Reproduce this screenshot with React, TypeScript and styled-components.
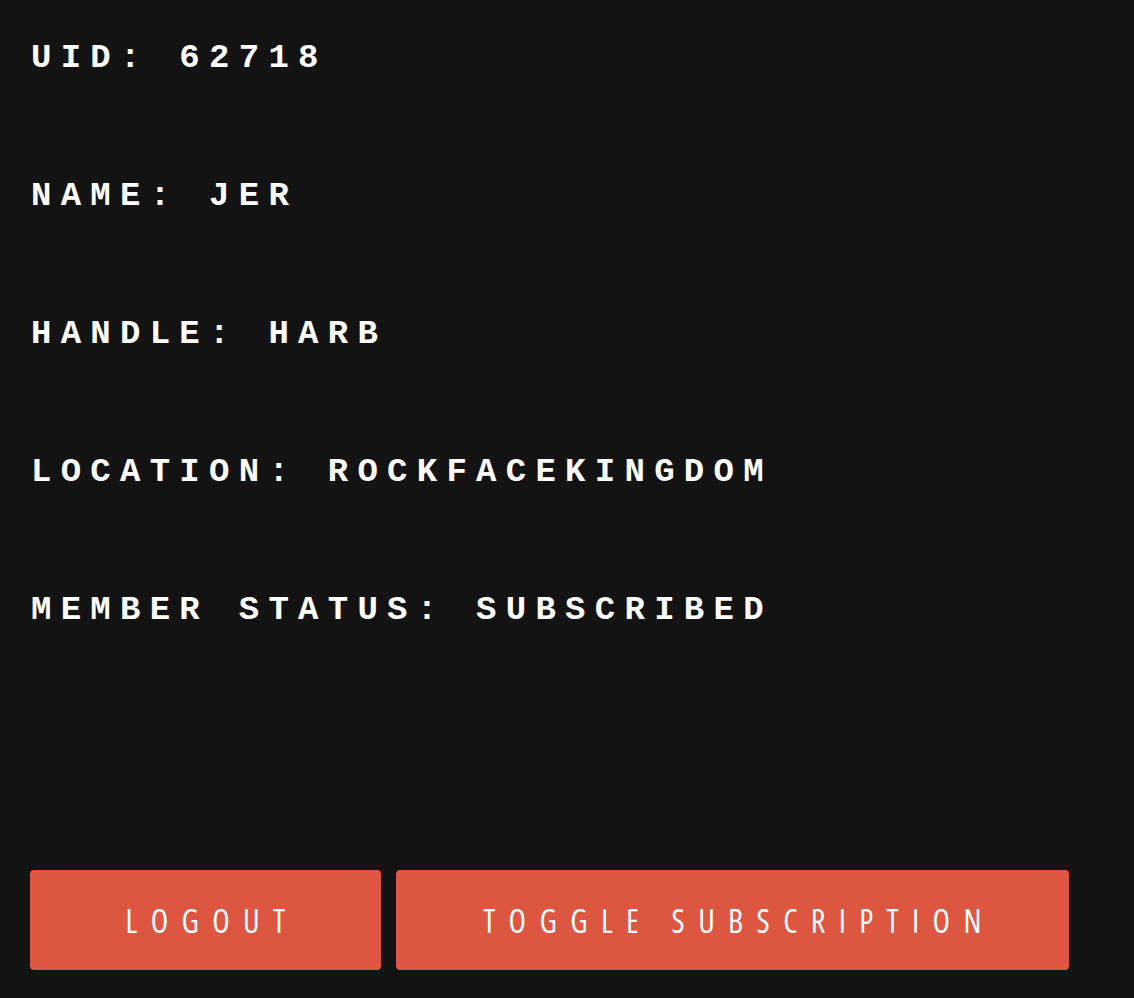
import React from "react";
import styled, { createGlobalStyle } from "styled-components";

const Global = createGlobalStyle`
  html, body { margin: 0; padding: 0; background: #131313; }
  body { font-family: "Liberation Mono", monospace; }
`;

const Page = styled.main`
  min-height: 998px;
  box-sizing: border-box;
  padding: 38px 30px 0 31px;
  background: #131313;
  display: flex;
  flex-direction: column;
`;

const InfoList = styled.div`
  display: flex;
  flex-direction: column;
  gap: 98px;
`;

const InfoRow = styled.div`
  font-family: "Liberation Mono", monospace;
  font-weight: bold;
  font-size: 34px;
  line-height: 40px;
  letter-spacing: 9.27px;
  color: #ffffff;
  text-transform: uppercase;
  white-space: nowrap;
`;

const Actions = styled.div`
  display: flex;
  gap: 15px;
  margin-top: 240px;
  margin-left: -1px;
`;

const ActionButton = styled.button<{ $width: number }>`
  width: ${(p) => p.$width}px;
  height: 100px;
  padding: 0 0 0 13px;
  border: none;
  border-radius: 4px;
  background: #dd5641;
  color: #ffffff;
  font-family: "Open Sans", sans-serif;
  font-stretch: condensed;
  font-size: 32px;
  font-weight: 400;
  letter-spacing: 13.4px;
  text-align: center;
  text-transform: uppercase;
  white-space: nowrap;
  cursor: pointer;
`;

const rows = [
  "UID: 62718",
  "Name: Jer",
  "Handle: Harb",
  "Location: RockFaceKingdom",
  "Member Status: Subscribed",
];

export default function App() {
  return (
    <>
      <Global />
      <Page>
        <InfoList>
          {rows.map((r) => (
            <InfoRow key={r}>{r}</InfoRow>
          ))}
        </InfoList>
        <Actions>
          <ActionButton $width={351}>Logout</ActionButton>
          <ActionButton $width={673}>Toggle Subscription</ActionButton>
        </Actions>
      </Page>
    </>
  );
}
